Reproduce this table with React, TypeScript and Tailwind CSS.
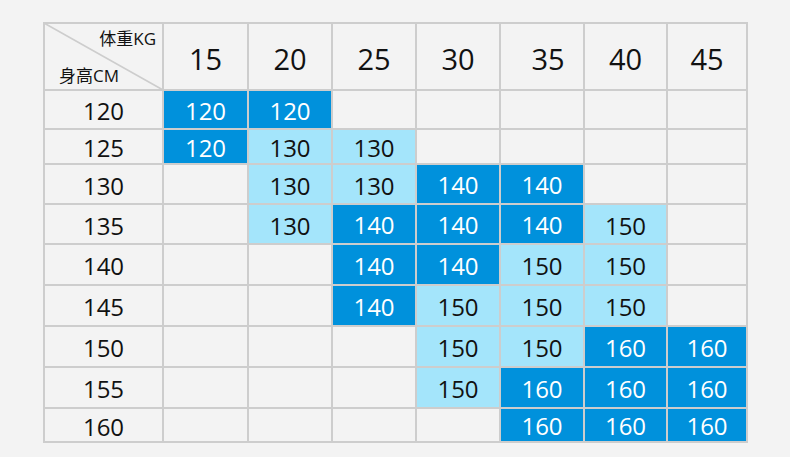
import React from "react";

type Cell = null | [string, "d" | "l"];

const headers = ["15", "20", "25", "30", "35", "40", "45"];

const rows: { label: string; cells: Cell[] }[] = [
  { label: "120", cells: [["120", "d"], ["120", "d"], null, null, null, null, null] },
  { label: "125", cells: [["120", "d"], ["130", "l"], ["130", "l"], null, null, null, null] },
  { label: "130", cells: [null, ["130", "l"], ["130", "l"], ["140", "d"], ["140", "d"], null, null] },
  { label: "135", cells: [null, ["130", "l"], ["140", "d"], ["140", "d"], ["140", "d"], ["150", "l"], null] },
  { label: "140", cells: [null, null, ["140", "d"], ["140", "d"], ["150", "l"], ["150", "l"], null] },
  { label: "145", cells: [null, null, ["140", "d"], ["150", "l"], ["150", "l"], ["150", "l"], null] },
  { label: "150", cells: [null, null, null, ["150", "l"], ["150", "l"], ["160", "d"], ["160", "d"]] },
  { label: "155", cells: [null, null, null, ["150", "l"], ["160", "d"], ["160", "d"], ["160", "d"]] },
  { label: "160", cells: [null, null, null, null, ["160", "d"], ["160", "d"], ["160", "d"]] },
];

const font = { fontFamily: '"Open Sans", "Noto Sans CJK SC", sans-serif' };

export default function App() {
  return (
    <div
      className="w-[790px] h-[457px] bg-[#f3f3f3] pl-[43px] pt-[22px]"
      style={font}
    >
      <div className="w-[705px] bg-[#cdcdcd] p-[2px] grid gap-[2px] grid-cols-[117px_83px_82px_82px_82px_82px_81px_78px] grid-rows-[65px_37px_33px_38px_38px_39px_39px_39px_39px_32px]">
        {/* corner header */}
        <div className="relative bg-[#f3f3f3] flex flex-col justify-between">
          <svg
            className="absolute -left-[1px] -top-[1px] w-[119px] h-[67px]"
            viewBox="0 0 119 67"
            preserveAspectRatio="none"
          >
            <line x1="0" y1="0" x2="119" y2="67" stroke="#cdcdcd" strokeWidth="1.6" />
          </svg>
          <div className="relative text-right pr-[6px] pt-[4px] text-[17px] leading-[21px] text-[#111]">
            体重KG
          </div>
          <div className="relative text-left pl-[14px] pb-[3px] text-[17px] leading-[21px] text-[#111]">
            身高CM
          </div>
        </div>
        {headers.map((h, i) => (
          <div
            key={h}
            className={`bg-[#f3f3f3] flex items-center justify-center text-[29px] leading-none text-[#111] pt-[3px] ${
              i === 4 ? "pl-[12px]" : ""
            }`}
          >
            {h}
          </div>
        ))}
        {rows.map((r) => (
          <React.Fragment key={r.label}>
            <div className="bg-[#f3f3f3] flex items-center justify-center text-[24px] leading-none text-[#111] pt-[3px]">
              {r.label}
            </div>
            {r.cells.map((c, j) =>
              c === null ? (
                <div key={j} className="bg-[#f3f3f3]" />
              ) : c[1] === "d" ? (
                <div
                  key={j}
                  className="bg-[#0091dc] flex items-center justify-center text-[24px] leading-none text-white pt-[2px]"
                >
                  {c[0]}
                </div>
              ) : (
                <div
                  key={j}
                  className="bg-[#a4e5fb] flex items-center justify-center text-[24px] leading-none text-[#111] pt-[3px]"
                >
                  {c[0]}
                </div>
              )
            )}
          </React.Fragment>
        ))}
      </div>
    </div>
  );
}
